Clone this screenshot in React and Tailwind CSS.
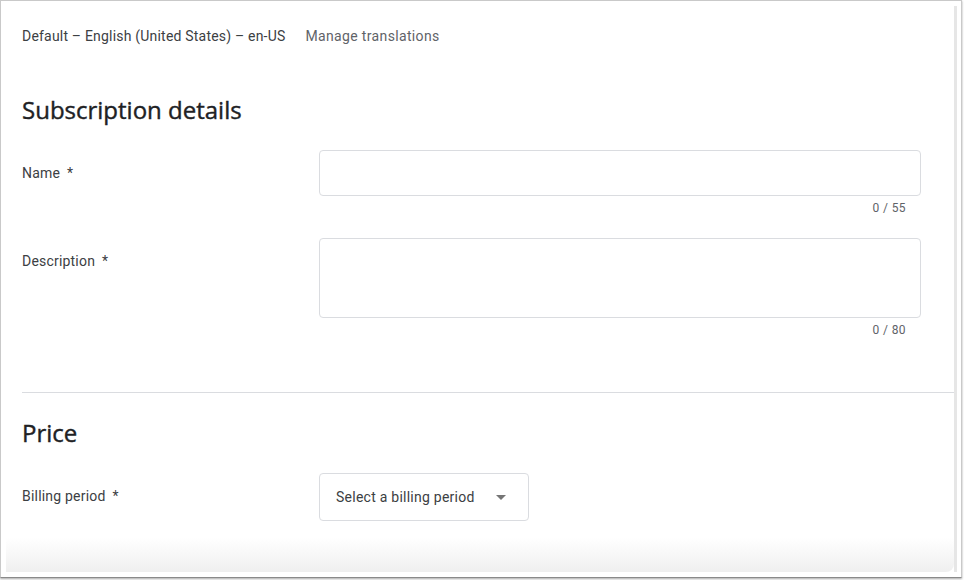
import React from 'react';

const font = { fontFamily: 'Roboto, "Liberation Sans", sans-serif' };
const headFont = { fontFamily: '"Open Sans", Roboto, sans-serif' };

const FieldRow = ({ label, children }) => (
  <div className="flex">
    <div className="w-[297px] shrink-0 pt-[13px] text-[14px] leading-5 tracking-[0.2px] text-[#3c4043]">
      {label}
      <span className="ml-[7px]">*</span>
    </div>
    <div className="flex-1 pr-[33px]">{children}</div>
  </div>
);

const Counter = ({ text }) => (
  <div className="mt-[4px] pr-[15px] text-right text-[12px] leading-4 tracking-[0.4px] text-[#5f6368]">{text}</div>
);

const App = () => {
  return (
    <div className="w-[964px] h-[580px] bg-white overflow-hidden" style={font}>
      <div className="w-[962px] h-[578px] border border-[#c9c9c9] border-b-[#8a8a8a] shadow-[0_1px_2px_rgba(0,0,0,0.35)] flex bg-white">
        <div className="flex-1 relative overflow-hidden">
          <div className="pl-[21px] pt-[25px]">
            <div className="flex items-center text-[14px] leading-5 tracking-[0.2px]">
              <span className="text-[#3c4043]">Default – English (United States) – en-US</span>
              <span className="ml-[20px] text-[#5f6368] tracking-[0.35px]">Manage translations</span>
            </div>

            <h2 className="mt-[50px] text-[24px] leading-7 text-[#202124] [-webkit-text-stroke:0.4px_#202124]" style={headFont}>Subscription details</h2>

            <div className="mt-[26px]">
              <FieldRow label="Name">
                <div className="h-[46px] rounded-[4px] border border-[#dadce0]" />
                <Counter text="0 / 55" />
              </FieldRow>
            </div>

            <div className="mt-[22px]">
              <FieldRow label="Description">
                <div className="h-[80px] rounded-[4px] border border-[#dadce0]" />
                <Counter text="0 / 80" />
              </FieldRow>
            </div>

            <div className="mt-[54px] h-px bg-[#dadce0]" />

            <h2 className="mt-[26px] text-[24px] leading-7 text-[#202124] [-webkit-text-stroke:0.4px_#202124]" style={headFont}>Price</h2>

            <div className="mt-[26px]">
              <FieldRow label="Billing period">
                <div className="inline-flex items-center h-[48px] w-[210px] rounded-[4px] border border-[#dadce0] pl-[16px] text-[14px] tracking-[0.25px] text-[#3c4043]">
                  <span>Select a billing period</span>
                  <svg className="ml-[21px]" width="10" height="5" viewBox="0 0 10 5">
                    <path d="M0 0 L10 0 L5 5 Z" fill="#757575" />
                  </svg>
                </div>
              </FieldRow>
            </div>
          </div>

          <div className="absolute left-[5px] right-0 bottom-[5px] h-[34px] bg-linear-to-b from-white/0 to-[#efefef] rounded-br-[8px]" />
        </div>
        <div className="w-[3px] mt-[5px] mb-[5px] bg-[#e6e6e6]" />
        <div className="w-[4px]" />
      </div>
    </div>
  );
};

export default App;
